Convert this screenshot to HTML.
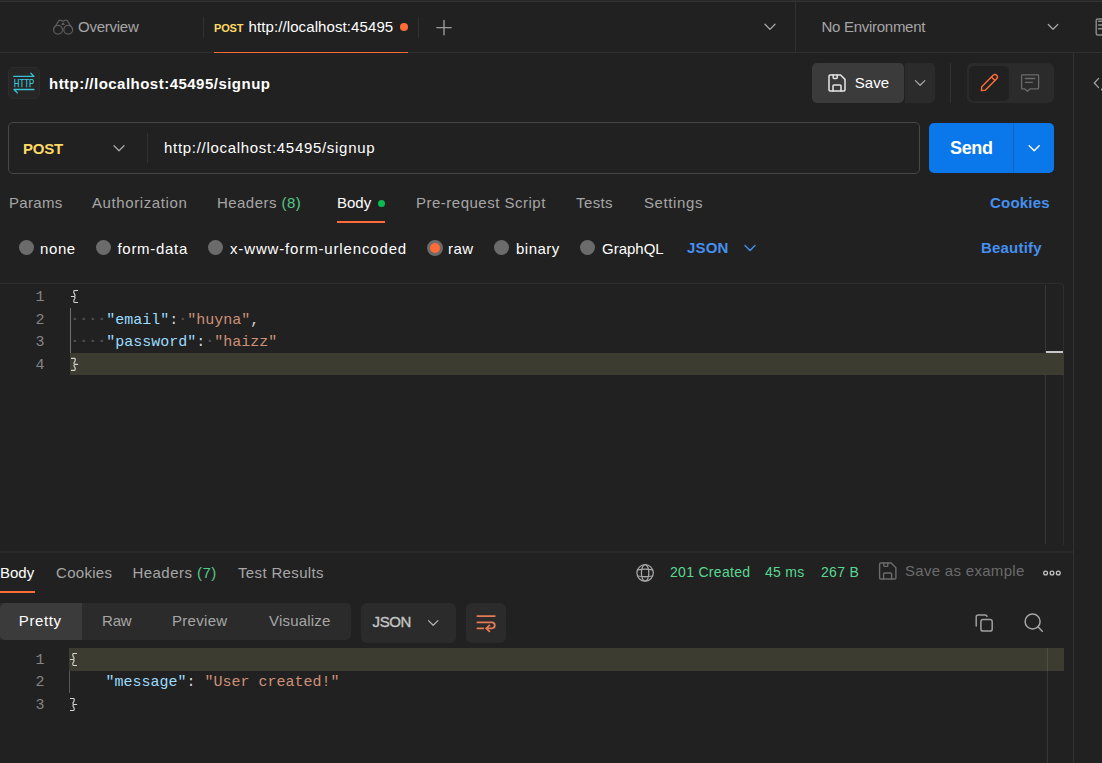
<!DOCTYPE html>
<html><head><meta charset="utf-8">
<style>
*{margin:0;padding:0;box-sizing:border-box}
html,body{width:1102px;height:763px;overflow:hidden;background:#212121}
body{position:relative;font-family:"Liberation Sans",sans-serif;font-size:15px;color:#a6a6a6}
.a{position:absolute}
.t{position:absolute;white-space:nowrap;line-height:1}
.hl{position:absolute;height:1px;background:#303030}
.vl{position:absolute;width:1px;background:#303030}
.k{color:#9cdcfe}.s{color:#ce9178}.ws{color:#505050;font-weight:bold;position:relative;top:-0.6px}
.mono{font-family:"Liberation Mono",monospace;font-size:15px}
</style></head><body>
<!-- top strip -->
<div class="a" style="left:0;top:0;width:1102px;height:1px;background:#2a2a2a"></div>
<div class="a" style="left:0;top:1px;width:1102px;height:1px;background:#333"></div>

<!-- tab bar -->
<div class="hl" style="left:0;top:52px;width:1102px"></div>
<div class="t" style="left:78px;top:19px;color:#a6a6a6;letter-spacing:-0.25px">Overview</div>
<div class="vl" style="left:203px;top:17px;height:21px"></div>
<div class="t" style="left:214px;top:23px;font-size:11px;font-weight:bold;color:#ffd966;letter-spacing:-0.2px">POST</div>
<div class="t" style="left:248.5px;top:18.6px;color:#fff;letter-spacing:0.1px">http://localhost:45495</div>
<div class="a" style="left:399.8px;top:22.7px;width:8.4px;height:8.4px;border-radius:50%;background:#ff6c37"></div>
<div class="a" style="left:214px;top:52px;width:194px;height:1px;background:#ff6c37"></div>
<div class="vl" style="left:418px;top:17px;height:21px"></div>
<div class="vl" style="left:795px;top:2px;height:50px"></div>
<div class="t" style="left:821.5px;top:18.7px;color:#a6a6a6;letter-spacing:-0.28px">No Environment</div>
<div class="vl" style="left:1073px;top:53px;height:710px"></div>

<!-- title row -->
<div class="a" style="left:8px;top:67px;width:32px;height:32px;border-radius:5px;background:#262626;border:1px solid #2c2c2c"></div>
<div class="t" style="left:49px;top:76px;font-weight:bold;color:#fff;letter-spacing:0.48px">http://localhost:45495/signup</div>
<div class="a" style="left:812px;top:63px;width:92px;height:40px;border-radius:5px;background:#3b3b3b"></div>
<div class="a" style="left:905px;top:63px;width:30px;height:40px;border-radius:0 5px 5px 0;background:#2b2b2b"></div>
<div class="t" style="left:854.8px;top:75px;color:#fff">Save</div>
<div class="vl" style="left:950px;top:63px;height:40px"></div>
<div class="a" style="left:967px;top:63px;width:87px;height:40px;border-radius:6px;background:#2b2b2b"></div>
<div class="a" style="left:969px;top:66px;width:40px;height:35px;border-radius:5px;background:#212121"></div>

<!-- url bar -->
<div class="a" style="left:8px;top:122px;width:912px;height:52px;border-radius:5px;border:1px solid #474747"></div>
<div class="t" style="left:23px;top:140.5px;font-weight:bold;color:#ffd966;letter-spacing:-0.2px">POST</div>
<div class="vl" style="left:147px;top:133px;height:30px"></div>
<div class="t" style="left:164px;top:140px;color:#fff;letter-spacing:0.7px">http://localhost:45495/signup</div>
<div class="a" style="left:929px;top:123px;width:125px;height:50px;border-radius:5px;background:#0a78ea"></div>
<div class="a" style="left:1013px;top:123px;width:1px;height:50px;background:#0a66c8"></div>
<div class="t" style="left:950px;top:139px;font-size:18px;font-weight:bold;color:#fff;letter-spacing:-0.35px">Send</div>

<!-- request tabs -->
<div class="t" style="left:9px;top:195px;letter-spacing:0.3px">Params</div>
<div class="t" style="left:92px;top:195px;letter-spacing:0.6px">Authorization</div>
<div class="t" style="left:217px;top:195px;letter-spacing:0.45px">Headers <span style="color:#55c987">(8)</span></div>
<div class="t" style="left:337px;top:195px;color:#fff;letter-spacing:0px">Body</div>
<div class="a" style="left:378px;top:200px;width:7px;height:7px;border-radius:50%;background:#0cbb52"></div>
<div class="a" style="left:337px;top:221px;width:48px;height:2px;background:#ff6c37"></div>
<div class="t" style="left:416px;top:195px;letter-spacing:0.5px">Pre-request Script</div>
<div class="t" style="left:576px;top:195px;letter-spacing:0.4px">Tests</div>
<div class="t" style="left:644px;top:195px;letter-spacing:0.6px">Settings</div>
<div class="t" style="left:990px;top:195px;font-weight:bold;color:#4590f0;letter-spacing:0.2px">Cookies</div>

<!-- radios -->
<div class="a" style="left:19px;top:240px;width:15px;height:15px;border-radius:50%;background:#6b6b6b"></div>
<div class="t" style="left:40px;top:241px;color:#fff;letter-spacing:0.6px">none</div>
<div class="a" style="left:96px;top:240px;width:15px;height:15px;border-radius:50%;background:#6b6b6b"></div>
<div class="t" style="left:117.5px;top:241px;color:#fff;letter-spacing:0.7px">form-data</div>
<div class="a" style="left:208px;top:240px;width:15px;height:15px;border-radius:50%;background:#6b6b6b"></div>
<div class="t" style="left:230px;top:241px;color:#fff;letter-spacing:0.85px">x-www-form-urlencoded</div>
<div class="a" style="left:427px;top:240px;width:16px;height:16px;border-radius:50%;background:#ff6c37;border:3px solid #6b6b6b"></div>
<div class="t" style="left:448px;top:241px;color:#fff;letter-spacing:0.5px">raw</div>
<div class="a" style="left:494px;top:240px;width:15px;height:15px;border-radius:50%;background:#6b6b6b"></div>
<div class="t" style="left:516px;top:241px;color:#fff;letter-spacing:0.5px">binary</div>
<div class="a" style="left:580px;top:240px;width:15px;height:15px;border-radius:50%;background:#6b6b6b"></div>
<div class="t" style="left:602px;top:241px;color:#fff;letter-spacing:0px">GraphQL</div>
<div class="t" style="left:687px;top:240px;font-weight:bold;color:#4590f0;letter-spacing:0.2px">JSON</div>
<div class="t" style="left:981px;top:240.3px;font-weight:bold;color:#4590f0;letter-spacing:0.2px">Beautify</div>

<!-- request editor -->
<div class="a" style="left:-4px;top:283px;width:1068px;height:262px;border:1px solid #2e2e2e;border-bottom:none;border-radius:4px 4px 0 0"></div>
<div class="vl" style="left:1045px;top:285px;height:259px;background:rgba(255,255,255,0.1)"></div>


<!-- request editor code -->
<div class="a" style="left:70px;top:353px;width:994px;height:22px;background:#3d3c30"></div>
<div class="a" style="left:1046px;top:351px;width:17px;height:2px;background:#c8c8c8"></div>
<div class="a" style="left:70px;top:308px;width:1px;height:45px;background:#707070"></div>
<div class="mono a" style="left:35.5px;top:287px;line-height:22.5px;color:#858585;width:9px;text-align:right">1<br>2<br>3<br>4</div>
<div class="mono a" style="left:70.2px;top:287px;line-height:22.5px;color:#d4d4d4;white-space:pre"> 
<span class="ws">····</span><span class="k">"email"</span>:<span class="ws">·</span><span class="s">"huyna"</span>,
<span class="ws">····</span><span class="k">"password"</span>:<span class="ws">·</span><span class="s">"haizz"</span>
 </div>
<!-- response editor code -->
<div class="a" style="left:69px;top:648px;width:995px;height:22.5px;background:#3d3c30"></div>
<div class="a" style="left:69px;top:671px;width:1px;height:22px;background:#5a5a5a"></div>
<div class="mono a" style="left:35.5px;top:649.6px;line-height:22.5px;color:#858585;width:9px;text-align:right">1<br>2<br>3</div>
<div class="mono a" style="left:69.5px;top:649.6px;line-height:22.5px;color:#d4d4d4;white-space:pre"> 
    <span class="k">"message"</span>: <span class="s">"User created!"</span>
 </div>

<!-- separator -->
<div class="a" style="left:0;top:551px;width:1073px;height:2px;background:#2b2b2b"></div>

<!-- response tabs -->
<div class="t" style="left:0;top:565px;color:#fff;letter-spacing:0px">Body</div>
<div class="a" style="left:0;top:591px;width:35px;height:2px;background:#ff6c37"></div>
<div class="t" style="left:56px;top:565px;letter-spacing:0.3px">Cookies</div>
<div class="t" style="left:132.5px;top:565px;letter-spacing:0.45px">Headers <span style="color:#55c987">(7)</span></div>
<div class="t" style="left:238px;top:565px;letter-spacing:0.35px">Test Results</div>
<div class="t" style="left:670px;top:565px;color:#5ad891;font-size:14px;letter-spacing:0.3px">201 Created</div>
<div class="t" style="left:765px;top:565px;color:#5ad891;font-size:14px;letter-spacing:0.3px">45 ms</div>
<div class="t" style="left:821px;top:565px;color:#5ad891;font-size:14px;letter-spacing:0.3px">267 B</div>
<div class="t" style="left:905px;top:563px;color:#6b6b6b;letter-spacing:0.3px">Save as example</div>

<!-- response toolbar -->
<div class="a" style="left:0;top:603px;width:351px;height:37px;border-radius:0 5px 5px 0;background:#2b2b2b"></div>
<div class="a" style="left:0;top:603px;width:82px;height:37px;border-radius:5px 0 0 5px;background:#3b3b3b"></div>
<div class="t" style="left:18.8px;top:613px;color:#fff;letter-spacing:0.6px">Pretty</div>
<div class="t" style="left:102px;top:613px;letter-spacing:-0.2px">Raw</div>
<div class="t" style="left:172px;top:613px;letter-spacing:0.3px">Preview</div>
<div class="t" style="left:269px;top:613px;letter-spacing:0.2px">Visualize</div>
<div class="a" style="left:361px;top:603px;width:95px;height:40px;border-radius:6px;background:#2b2b2b"></div>
<div class="t" style="left:372.5px;top:614px;color:#c4c4c4;-webkit-text-stroke:0.35px #c4c4c4;letter-spacing:-0.35px">JSON</div>
<div class="a" style="left:466px;top:603px;width:40px;height:40px;border-radius:6px;background:#2b2b2b"></div>

<!-- response editor -->
<div class="vl" style="left:1047px;top:648px;height:115px;background:rgba(255,255,255,0.1)"></div>

<svg class="a" style="left:0;top:0" width="1102" height="763" viewBox="0 0 1102 763" fill="none" stroke-linecap="round" stroke-linejoin="round">
 <!-- binoculars -->
 <g stroke="#5e5e5e" stroke-width="1.2">
  <circle cx="58" cy="29.7" r="4.4"/>
  <circle cx="68.2" cy="29.7" r="4.4"/>
  <path d="M53.8 28.5 L58.8 20.8 Q60.2 19.6 61.6 20.6 L63.1 21.3 L64.6 20.6 Q66 19.6 67.4 20.8 L72.4 28.5"/>
  <path d="M62 24.5 L63.1 23 L64.2 24.5 Z"/>
 </g>
 <!-- plus -->
 <path d="M444 20.5 V34.8 M436.8 27.6 H451.2" stroke="#9a9a9a" stroke-width="1.4"/>
 <!-- chevrons tab bar -->
 <path d="M765 24.2 L770 29.4 L775 24.2" stroke="#a6a6a6" stroke-width="1.3"/>
 <path d="M1048.3 24.5 L1053 29.3 L1057.8 24.5" stroke="#a6a6a6" stroke-width="1.25"/>
 <!-- right top icon -->
 <g stroke="#8c8c8c" stroke-width="1.4">
  <rect x="1096.2" y="19" width="10" height="16" rx="1.5"/>
  <path d="M1098.5 21.3 H1104 M1098.5 25 H1104 M1098.5 28.7 H1104"/>
 </g>
 <path d="M1098.6 78.4 L1094.3 83 L1098.6 87.6" stroke="#a0a0a0" stroke-width="1.3"/>
 <circle cx="1101.9" cy="89.4" r="1" fill="#b0b0b0" stroke="none"/>
 <!-- HTTP icon -->
 <g stroke="#3bc4d8" stroke-width="1.3">
  <path d="M13.8 76.4 H33.8 M30.8 73.2 L34 76.4"/>
  <path d="M14 89.5 H34 M14 89.5 L17.3 92.8"/>
 </g>
 <text x="13.8" y="86.9" font-family="Liberation Sans" font-size="11" fill="#3bc4d8" textLength="20.4" lengthAdjust="spacingAndGlyphs" stroke="#3bc4d8" stroke-width="0.25">HTTP</text>
 <!-- floppy save -->
 <g stroke="#e6e6e6" stroke-width="1.5">
  <path d="M830.2 75 H840.6 L845 79.4 V89.8 Q845 91 843.8 91 H830.2 Q829 91 829 89.8 V76.2 Q829 75 830.2 75 Z"/>
  <path d="M833.2 75 V77.6 Q833.2 78.4 834 78.4 H836.4 Q837.2 78.4 837.2 77.6 V75"/>
  <path d="M833 91 V86 Q833 85 834 85 H840 Q841 85 841 86 V91"/>
 </g>
 <path d="M915.4 80.6 L920.1 85.3 L924.8 80.6" stroke="#a6a6a6" stroke-width="1.3"/>
 <!-- pencil -->
 <g transform="rotate(-45 989.1 82.9)" stroke="#ff6c37" stroke-width="1.4">
  <path d="M978.2 82.9 L981.2 80.4 H997.3 Q999.8 80.4 999.8 82.9 Q999.8 85.4 997.3 85.4 H981.2 Z"/>
  <path d="M994.9 80.4 V85.4"/>
 </g>
 <!-- comment -->
 <g stroke="#6b6b6b" stroke-width="1.3">
  <path d="M1022.3 74.8 H1037.9 Q1038.6 74.8 1038.6 75.5 V88.2 Q1038.6 88.9 1037.9 88.9 H1030 L1027.4 91.3 L1024.8 88.9 H1022.3 Q1021.6 88.9 1021.6 88.2 V75.5 Q1021.6 74.8 1022.3 74.8 Z"/>
  <path d="M1025.3 78.5 H1034.8 M1025.3 82.3 H1032.3"/>
 </g>
 <!-- POST chevron -->
 <path d="M114 145.8 L119 150.8 L124 145.8" stroke="#a6a6a6" stroke-width="1.3"/>
 <!-- send chevron -->
 <path d="M1029.2 145.8 L1034.2 150.8 L1039.2 145.8" stroke="#ffffff" stroke-width="1.4"/>
 <!-- JSON chevron -->
 <path d="M745 245.5 L750 250.5 L755 245.5" stroke="#4590f0" stroke-width="1.4"/>
 <!-- globe -->
 <g stroke="#a8a8a8" stroke-width="1.25">
  <circle cx="645.1" cy="572.9" r="8.2"/>
  <ellipse cx="645.1" cy="572.9" rx="3.7" ry="8.2"/>
  <path d="M638 569.9 Q645.1 568.4 652.2 569.9 M638 576 Q645.1 577.5 652.2 576"/>
 </g>
 <!-- floppy gray -->
 <g stroke="#6b6b6b" stroke-width="1.4">
  <path d="M880.8 563 H891.2 L895.9 567.7 V577.8 Q895.9 579 894.7 579 H880.8 Q879.6 579 879.6 577.8 V564.2 Q879.6 563 880.8 563 Z"/>
  <path d="M883.8 563 V565.6 Q883.8 566.4 884.6 566.4 H887 Q887.8 566.4 887.8 565.6 V563"/>
  <path d="M883.6 579 V574 Q883.6 573 884.6 573 H890.6 Q891.6 573 891.6 574 V579"/>
 </g>
 <!-- ooo -->
 <g stroke="#c4c4c4" stroke-width="1.3">
  <circle cx="1045.6" cy="573" r="1.9"/>
  <circle cx="1052" cy="573" r="1.9"/>
  <circle cx="1058.3" cy="573" r="1.9"/>
 </g>
 <!-- response JSON chevron -->
 <path d="M428.5 620.6 L433.2 625.3 L437.9 620.6" stroke="#b0b0b0" stroke-width="1.3"/>
 <!-- wrap -->
 <g stroke="#e57b52" stroke-width="1.8">
  <path d="M477.4 616.1 H494.8"/>
  <path d="M477.4 622.4 H491.8 A3 2.95 0 0 1 491.8 628.3 H486.4"/>
  <path d="M489.4 625.4 L486.3 628.3 L489.4 631.3"/>
  <path d="M477.4 628.3 H483.4"/>
 </g>
 <!-- copy -->
 <g stroke="#a0a0a0" stroke-width="1.5">
  <rect x="980.9" y="619.6" width="11.3" height="11.5" rx="2.2"/>
  <path d="M976.2 625.9 V616.9 Q976.2 614.9 978.2 614.9 H985 Q986.8 614.9 987 616.4"/>
 </g>
 <!-- search -->
 <g stroke="#a6a6a6" stroke-width="1.5">
  <circle cx="1032.6" cy="621.5" r="7.5"/>
  <path d="M1037.9 626.8 L1042.3 631.2"/>
 </g>

 <!-- braces -->
 <g stroke="#d4d4d4" stroke-width="1.15" stroke-linecap="butt" stroke-linejoin="miter">
  <path d="M78 290.5 H74.6 Q73.8 290.5 73.8 291.4 V292.3 Q73.8 293.4 74.6 294.2 Q75.4 295.1 74.9 295.9 Q74.5 296.5 73.8 296.5 H70.9 M73.8 296.5 Q74.5 296.5 74.9 297.1 Q75.4 297.9 74.6 298.8 Q73.8 299.6 73.8 300.7 V301.6 Q73.8 302.5 74.6 302.5 H78"/>
  <path transform="translate(0 67.9)" d="M71 290.5 H74.4 Q75.2 290.5 75.2 291.4 V292.3 Q75.2 293.4 74.4 294.2 Q73.6 295.1 74.1 295.9 Q74.5 296.5 75.2 296.5 H78.1 M75.2 296.5 Q74.5 296.5 74.1 297.1 Q73.6 297.9 74.4 298.8 Q75.2 299.6 75.2 300.7 V301.6 Q75.2 302.5 74.4 302.5 H71"/>
  <path transform="translate(-1 363)" d="M78 290.5 H74.6 Q73.8 290.5 73.8 291.4 V292.3 Q73.8 293.4 74.6 294.2 Q75.4 295.1 74.9 295.9 Q74.5 296.5 73.8 296.5 H70.9 M73.8 296.5 Q74.5 296.5 74.9 297.1 Q75.4 297.9 74.6 298.8 Q73.8 299.6 73.8 300.7 V301.6 Q73.8 302.5 74.6 302.5 H78"/>
  <path transform="translate(-1 408)" d="M71 290.5 H74.4 Q75.2 290.5 75.2 291.4 V292.3 Q75.2 293.4 74.4 294.2 Q73.6 295.1 74.1 295.9 Q74.5 296.5 75.2 296.5 H78.1 M75.2 296.5 Q74.5 296.5 74.1 297.1 Q73.6 297.9 74.4 298.8 Q75.2 299.6 75.2 300.7 V301.6 Q75.2 302.5 74.4 302.5 H71"/>
 </g>
</svg>
</body></html>
